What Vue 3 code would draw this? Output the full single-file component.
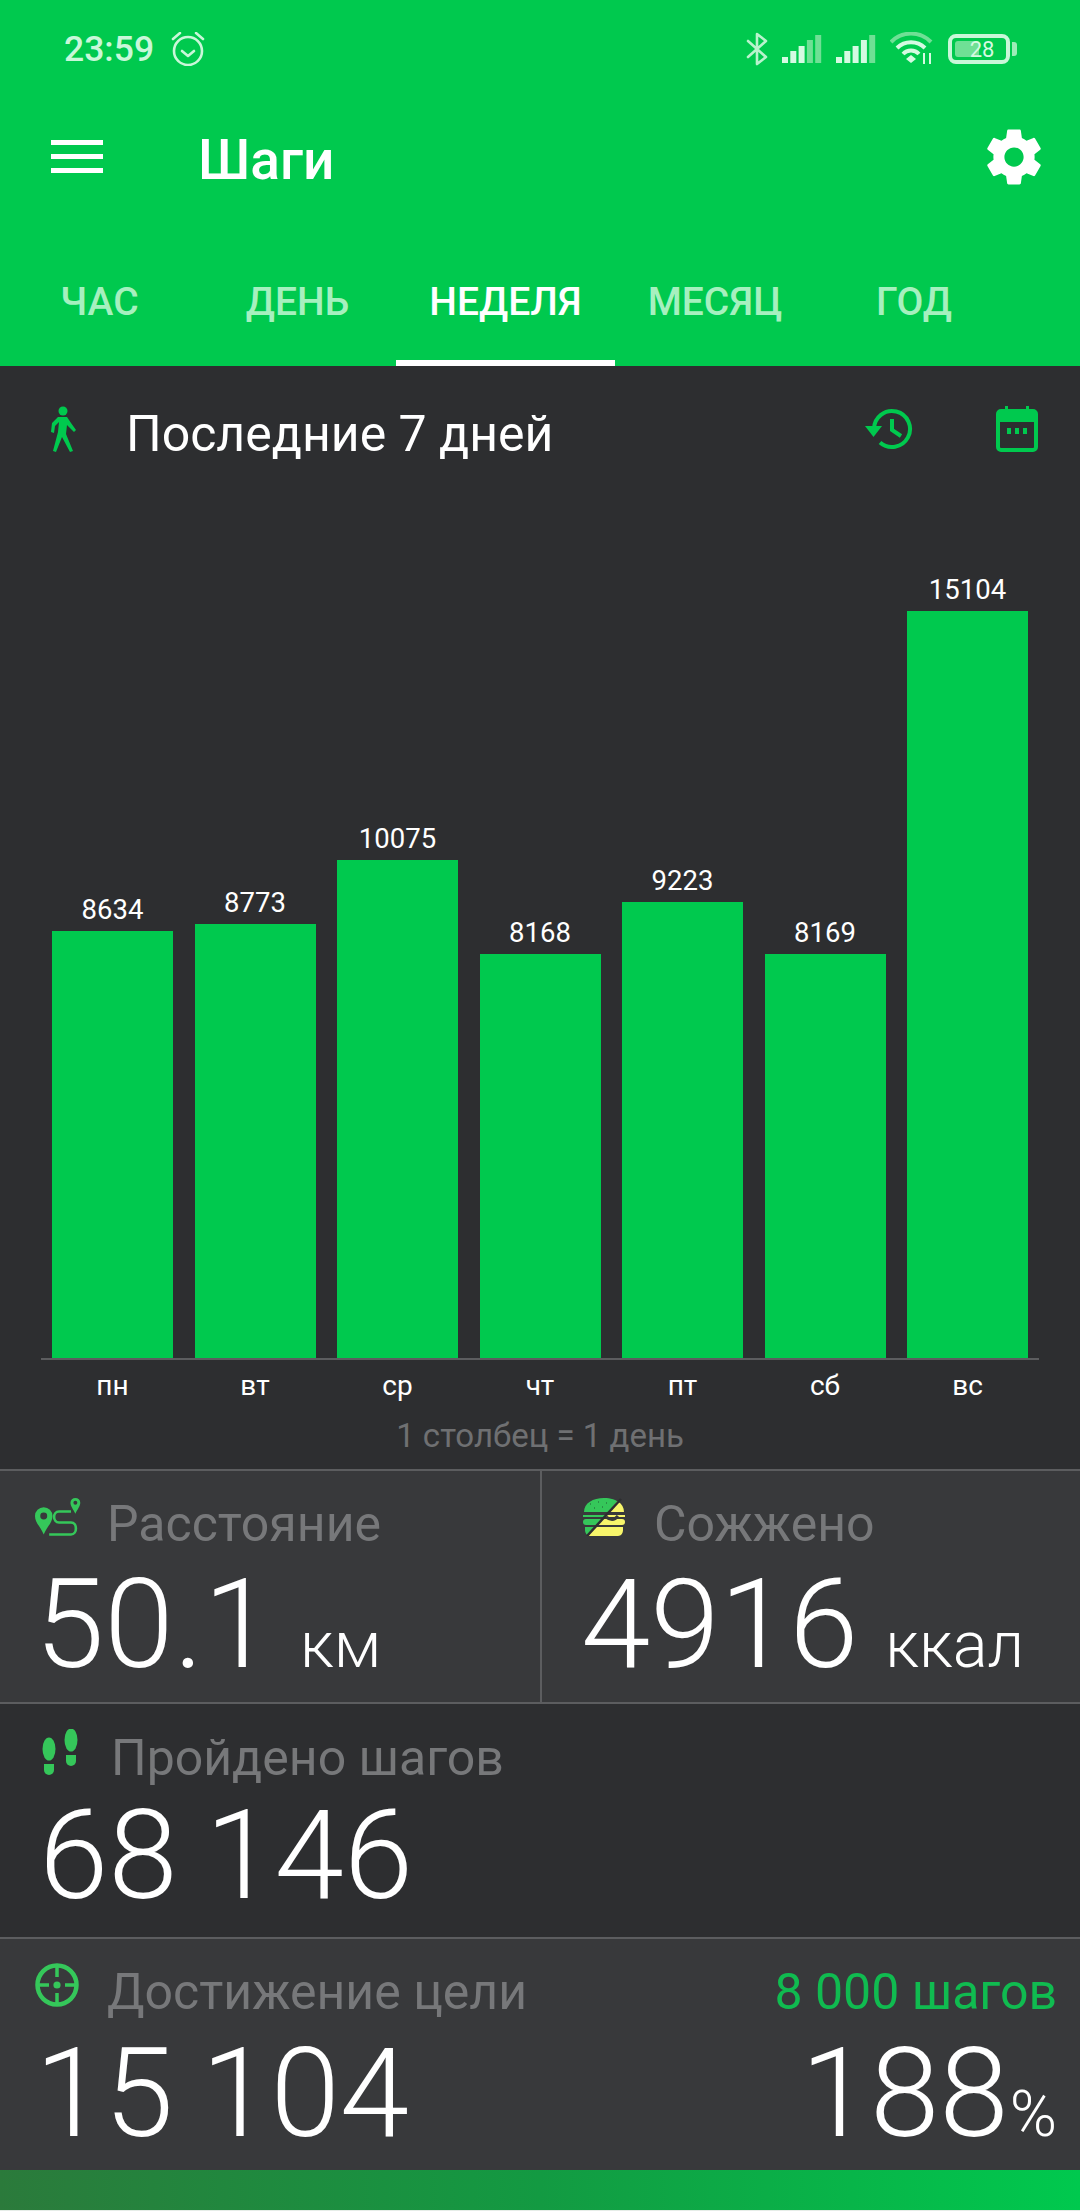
<template>
  <div class="page">
    <header class="top">
      <div class="status">
        <div class="status-left">
          <span class="time">23:59</span>
          <svg class="alarm" width="34" height="34" viewBox="0 0 34 34" fill="none" stroke="#c9f7d9" stroke-width="2.6">
            <circle cx="17" cy="19" r="14" />
            <path d="M11 19l6 5 6-5" stroke-linecap="round" stroke-linejoin="round" />
            <path d="M2 7l7-6M32 7l-7-6" stroke-linecap="round" />
          </svg>
        </div>
        <div class="status-right">
          <svg width="22" height="34" viewBox="0 0 22 34" fill="none" stroke="#b9f3cd" stroke-width="2.6" stroke-linejoin="round" stroke-linecap="round">
            <path d="M2 9l18 16-9 7V2l9 7L2 25" />
          </svg>
          <svg v-for="lit in [3, 4]" :key="lit" width="40" height="30" viewBox="0 0 40 30">
            <rect
              v-for="(h, i) in signal"
              :key="i"
              :x="i * 8.3"
              :y="29 - h"
              width="6"
              :height="h"
              :fill="i < lit ? '#d5fae2' : '#6fe095'"
            />
          </svg>
          <svg class="wifi" width="44" height="34" viewBox="0 0 44 34" fill="none">
            <path d="M1 10a28 28 0 0 1 40 0" stroke="#6fe095" stroke-width="4" />
            <path d="M7 16a20 20 0 0 1 28 0" stroke="#d5fae2" stroke-width="4" />
            <path d="M13 22a11 11 0 0 1 16 0" stroke="#d5fae2" stroke-width="4" />
            <path d="M16 27l5-4 5 4-5 4z" fill="#d5fae2" />
            <path d="M34 21v11M40 21v11" stroke="#d5fae2" stroke-width="2" />
          </svg>
          <div class="battery">
            <div class="battery-fill"></div>
            <span class="battery-num">28</span>
            <div class="battery-tip"></div>
          </div>
        </div>
      </div>

      <div class="toolbar">
        <div class="burger"><span></span><span></span><span></span></div>
        <h1>Шаги</h1>
        <svg class="gear" width="66" height="66" viewBox="0 0 24 24" fill="#fff">
          <path d="M19.43 12.98c.04-.32.07-.64.07-.98s-.03-.66-.07-.98l2.11-1.65c.19-.15.24-.42.12-.64l-2-3.46c-.12-.22-.39-.3-.61-.22l-2.49 1c-.52-.4-1.08-.73-1.69-.98l-.38-2.65C14.46 2.18 14.25 2 14 2h-4c-.25 0-.46.18-.49.42l-.38 2.65c-.61.25-1.17.59-1.69.98l-2.49-1c-.23-.09-.49 0-.61.22l-2 3.46c-.13.22-.07.49.12.64l2.11 1.65c-.04.32-.07.65-.07.98s.03.66.07.98l-2.11 1.65c-.19.15-.24.42-.12.64l2 3.46c.12.22.39.3.61.22l2.49-1c.52.4 1.08.73 1.69.98l.38 2.65c.03.24.24.42.49.42h4c.25 0 .46-.18.49-.42l.38-2.65c.61-.25 1.17-.59 1.69-.98l2.49 1c.23.09.49 0 .61-.22l2-3.46c.12-.22.07-.49-.12-.64l-2.11-1.65zM12 15.5c-1.93 0-3.5-1.57-3.5-3.5s1.57-3.5 3.5-3.5 3.5 1.57 3.5 3.5-1.57 3.5-3.5 3.5z" />
        </svg>
      </div>

      <nav class="tabs">
        <div v-for="t in tabs" :key="t" class="tab" :class="{ active: t === 'НЕДЕЛЯ' }">{{ t }}</div>
      </nav>
    </header>

    <section class="range">
      <svg class="walk" width="28" height="46" viewBox="0 0 28 46" fill="#00c94e">
        <circle cx="14" cy="5" r="4.5" />
        <path d="M9 11h9l4 6 5 7-2 2-7-7-1 9 7 17-3 1-8-15-6 15-3-1 5-19 1-10-4 4-1 7-3-1 1-9z" />
      </svg>
      <span class="range-title">Последние 7 дней</span>
      <svg class="history" width="48" height="42" viewBox="0 0 48 42" fill="none" stroke="#00c94e" stroke-width="4">
        <path d="M9 21a18 18 0 1 1 6 13.4" />
        <path d="M0 18h17l-8.5 11z" fill="#00c94e" stroke="none" />
        <path d="M27 11v11l9 6" />
      </svg>
      <svg class="calendar" width="42" height="46" viewBox="0 0 42 46" fill="none">
        <rect x="2" y="5" width="38" height="39" rx="3" stroke="#00c94e" stroke-width="4" />
        <rect x="2" y="5" width="38" height="11" fill="#00c94e" />
        <rect x="9" y="0" width="3" height="6" fill="#00c94e" />
        <rect x="30" y="0" width="3" height="6" fill="#00c94e" />
        <path d="M11 22h4v6h-4zM19 22h4v6h-4zM27 22h4v6h-4z" fill="#00c94e" />
      </svg>
    </section>

    <section class="chart">
      <div class="bars">
        <div v-for="d in days" :key="d.name" class="col">
          <span class="val">{{ d.val }}</span>
          <div class="bar" :style="{ height: barH(d.val) + 'px' }"></div>
        </div>
      </div>
      <div class="axis">
        <span v-for="d in days" :key="d.name">{{ d.name }}</span>
      </div>
      <div class="caption">1 столбец = 1 день</div>
    </section>

    <section class="row row-light two">
      <div class="cell">
        <div class="label">
          <svg class="ic route" width="48" height="44" viewBox="0 0 44 40">
            <path d="M8 36C5 29 0 25 0 19a8 8 0 0 1 16 0c0 6-5 10-8 17z" fill="#35c75a" />
            <circle cx="8" cy="19" r="3.2" fill="#38393b" />
            <path d="M37 17c-2-4-4.500-7-4.500-10a4.500 4.500 0 0 1 9 0c0 3-2.500 6-4.500 10z" fill="#35c75a" />
            <circle cx="37" cy="7" r="1.800" fill="#38393b" />
            <path d="M33 15H22c-6 0-6 10 0 10h11c6 0 6 11 0 11H13" fill="none" stroke="#35c75a" stroke-width="2.400" />
          </svg>
          <span>Расстояние</span>
        </div>
        <div class="big">50.1<small class="unit km">км</small></div>
      </div>
      <div class="cell cell-right">
        <div class="label">
          <svg class="ic" width="44" height="38" viewBox="0 0 44 38">
            <clipPath id="burger-left"><path d="M0 0h38L6 38H0z" /></clipPath>
            <clipPath id="burger-right"><path d="M38 0h6v38H6z" /></clipPath>
            <g clip-path="url(#burger-left)" fill="#35c75a">
              <path d="M2 14C2 5 11 0 22 0s20 5 20 14z" />
              <rect x="1" y="17" width="42" height="2" />
              <rect x="1" y="21" width="42" height="6" rx="3" />
              <path d="M3 29h38v3c0 3-2 6-5 6H8c-3 0-5-3-5-6z" />
            </g>
            <g clip-path="url(#burger-right)" fill="#f7f56b">
              <path d="M2 14C2 5 11 0 22 0s20 5 20 14z" />
              <rect x="1" y="17" width="42" height="2" />
              <rect x="1" y="21" width="42" height="6" rx="3" />
              <path d="M3 29h38v3c0 3-2 6-5 6H8c-3 0-5-3-5-6z" />
            </g>
            <path d="M24 19c4 3 8 4 12-1" fill="none" stroke="#38393b" stroke-width="3" />
            <path d="M8 6h1M16 4h1M24 5h1M12 10h1M20 9h1" stroke="#2b8f46" stroke-width="2" />
            <path d="M5 38L39 1" stroke="#2d2e30" stroke-width="2.500" />
          </svg>
          <span>Сожжено</span>
        </div>
        <div class="big">4916<small class="unit kcal">ккал</small></div>
      </div>
    </section>

    <section class="row row-dark">
      <div class="label steps">
        <svg class="ic" width="38" height="46" viewBox="0 0 38 46" fill="#35c75a">
          <ellipse cx="7" cy="20" rx="6.500" ry="11.500" />
          <path d="M2 35h10v6a5 5 0 0 1-10 0z" />
          <ellipse cx="29" cy="11" rx="6.500" ry="11.500" />
          <path d="M24 26h10v6a5 5 0 0 1-10 0z" />
        </svg>
        <span>Пройдено шагов</span>
      </div>
      <div class="big">68 146</div>
    </section>

    <section class="row row-light goal">
      <div class="goal-top">
        <div class="label">
          <svg class="ic" width="44" height="44" viewBox="0 0 44 44" fill="none" stroke="#35c75a" stroke-width="4.500">
            <circle cx="22" cy="22" r="19.500" />
            <path d="M22 3v11M22 30v11M3 22h11M30 22h11" stroke-width="3.500" />
            <circle cx="22" cy="22" r="3.600" fill="#35c75a" stroke="none" />
          </svg>
          <span>Достижение цели</span>
        </div>
        <span class="target">8 000 шагов</span>
      </div>
      <div class="goal-bottom">
        <div class="big">15 104</div>
        <div class="big pct">188<small>%</small></div>
      </div>
    </section>

    <div class="progress"></div>
  </div>
</template>

<script setup>
const tabs = ["ЧАС", "ДЕНЬ", "НЕДЕЛЯ", "МЕСЯЦ", "ГОД"];

const days = [
  { name: "пн", val: 8634 },
  { name: "вт", val: 8773 },
  { name: "ср", val: 10075 },
  { name: "чт", val: 8168 },
  { name: "пт", val: 9223 },
  { name: "сб", val: 8169 },
  { name: "вс", val: 15104 },
];

// высоты делений значка сети
const signal = [6, 12, 17, 23, 28];

// самый высокий столбец 747px
const barH = (v) => Math.round((v * 747) / 15104);
</script>

<style>
html,
body {
  margin: 0;
  background: #2d2e30;
}
</style>

<style scoped>
* {
  box-sizing: border-box;
}

.page {
  width: 1080px;
  height: 2211px;
  overflow: hidden;
  background: #e6ede8;
  font-family: Roboto, "Noto Sans", sans-serif;
  color: #fff;
  display: flex;
  flex-direction: column;
}

/* шапка */
.top {
  height: 366px;
  background: #00c94e;
  display: flex;
  flex-direction: column;
}

.status {
  height: 98px;
  padding: 0 0 0 64px;
  display: flex;
  justify-content: space-between;
  align-items: center;
}

.status-left {
  display: flex;
  align-items: center;
  gap: 17px;
  color: #c9f7d9;
}

.time {
  font-size: 35.5px;
  font-weight: 500;
}

.status-right {
  display: flex;
  align-items: center;
  gap: 14px;
  padding-right: 70px;
}

.battery {
  position: relative;
  width: 62px;
  height: 30px;
  border: 4px solid #c9f7d9;
  border-radius: 8px;
  display: flex;
  align-items: center;
  justify-content: center;
}

.battery-fill {
  position: absolute;
  left: 3px;
  top: 3px;
  bottom: 3px;
  width: 24px;
  background: #6fe095;
  border-radius: 3px;
}

.battery-num {
  position: relative;
  font-size: 22px;
  color: #d5fae2;
  margin-left: 6px;
}

.battery-tip {
  position: absolute;
  right: -11px;
  top: 4px;
  width: 5px;
  height: 14px;
  background: #9decb7;
  border-radius: 0 3px 3px 0;
}

.toolbar {
  height: 124px;
  display: flex;
  align-items: center;
  padding: 0 33px 6px 51px;
}

.burger {
  width: 52px;
  display: flex;
  flex-direction: column;
  gap: 9px;
  margin-top: -2px;
}

.burger span {
  height: 5px;
  background: #fff;
}

h1 {
  margin: 6px 0 0 95px;
  flex: 1;
  font-size: 55px;
  font-weight: 500;
}

.tabs {
  height: 144px;
  display: grid;
  grid-template-columns: 199px 197px 219px 200px 198px;
}

.tab {
  font-size: 39px;
  font-weight: 500;
  text-align: center;
  color: #a6f0bf;
  padding-top: 57px;
}

.tab.active {
  color: #fff;
  border-bottom: 6px solid #fff;
}

/* период */
.range {
  height: 122px;
  display: flex;
  align-items: center;
  padding: 4px 0 0 49px;
  background: #2d2e30;
}

.range-title {
  font-size: 50px;
  margin-left: 49px;
  padding-top: 10px;
  flex: 1;
}

.history {
  margin-right: 83px;
}

.calendar {
  margin-right: 42px;
}

/* график */
.chart {
  height: 981px;
  display: flex;
  flex-direction: column;
  justify-content: flex-end;
  background: #2d2e30;
}

.bars {
  margin: 0 41px;
  padding: 0 11px;
  display: grid;
  grid-template-columns: repeat(7, 121px);
  column-gap: 21.5px;
  align-items: end;
  border-bottom: 2px solid #5c5d5f;
}

.col {
  display: flex;
  flex-direction: column;
  align-items: center;
}

.val {
  font-size: 27.5px;
  line-height: 34px;
  margin-bottom: 4px;
}

.bar {
  width: 121px;
  background: #00c94e;
}

.axis {
  margin: 0 52px;
  display: grid;
  grid-template-columns: repeat(7, 121px);
  column-gap: 21.5px;
  text-align: center;
  font-size: 28px;
  line-height: 34px;
  padding-top: 9px;
}

.caption {
  text-align: center;
  font-size: 33px;
  line-height: 40px;
  color: #6f7072;
  padding: 13px 0;
}

/* показатели */
.row {
  border-top: 2px solid #5c5d5f;
}

.row-light {
  background: #38393b;
}

.row-dark {
  background: #2d2e30;
  height: 235px;
  padding: 27px 0 0 42px;
}

.row-dark .big {
  margin-top: -2px;
  margin-left: -3px;
}

.two {
  height: 233px;
  display: grid;
  grid-template-columns: 540px 540px;
}

.cell {
  padding: 26px 0 0 35px;
}

.cell .big {
  margin-top: 1px;
}

.cell-right {
  border-left: 2px solid #5c5d5f;
  padding-left: 40px;
}

.cell-right .big {
  margin-left: -1px;
}

.label {
  display: flex;
  align-items: center;
  height: 54px;
  font-size: 50px;
  color: #77787a;
}

.label .ic {
  margin-right: 28px;
  margin-bottom: 14px;
  flex: none;
}

.label .route {
  margin-right: 24px;
}

.steps .ic {
  margin-bottom: 12px;
  margin-right: 31px;
}

.big {
  font-size: 125px;
  font-weight: 300;
  line-height: 146px;
  word-spacing: -3px;
}

.unit {
  font-weight: 300;
  font-size: 65px;
}

.km {
  margin-left: 27px;
}

.kcal {
  margin-left: 27px;
}

.goal {
  height: 233px;
  padding: 24px 23px 0 35px;
}

.goal-top {
  display: flex;
  justify-content: space-between;
  align-items: center;
}

.target {
  font-size: 50px;
  color: #10bb50;
}

.goal-bottom {
  display: flex;
  justify-content: space-between;
}

.pct small {
  font-size: 64px;
  font-weight: 300;
  margin-left: 1px;
}

.progress {
  height: 40px;
  background: linear-gradient(90deg, #2b7a3b 0%, #139a42 50%, #00c94e 100%);
}
</style>
